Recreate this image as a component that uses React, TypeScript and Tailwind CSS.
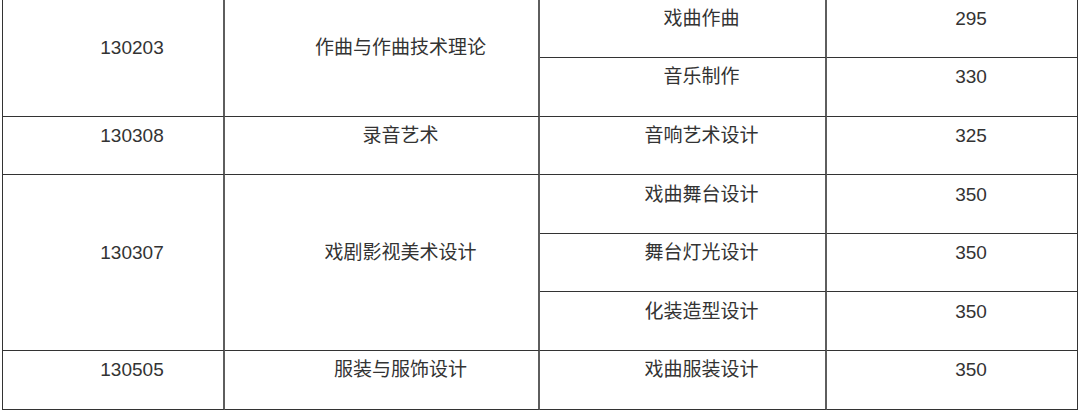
import React from 'react';

type Cell = { text: string; col: string; row: string; last?: boolean };

const cells: Cell[] = [
  { text: '130203', col: 'col-start-1', row: 'row-start-1 row-span-2' },
  { text: '作曲与作曲技术理论', col: 'col-start-2', row: 'row-start-1 row-span-2' },
  { text: '戏曲作曲', col: 'col-start-3', row: 'row-start-1' },
  { text: '295', col: 'col-start-4', row: 'row-start-1', last: true },
  { text: '音乐制作', col: 'col-start-3', row: 'row-start-2' },
  { text: '330', col: 'col-start-4', row: 'row-start-2', last: true },
  { text: '130308', col: 'col-start-1', row: 'row-start-3' },
  { text: '录音艺术', col: 'col-start-2', row: 'row-start-3' },
  { text: '音响艺术设计', col: 'col-start-3', row: 'row-start-3' },
  { text: '325', col: 'col-start-4', row: 'row-start-3', last: true },
  { text: '130307', col: 'col-start-1', row: 'row-start-4 row-span-3' },
  { text: '戏剧影视美术设计', col: 'col-start-2', row: 'row-start-4 row-span-3' },
  { text: '戏曲舞台设计', col: 'col-start-3', row: 'row-start-4' },
  { text: '350', col: 'col-start-4', row: 'row-start-4', last: true },
  { text: '舞台灯光设计', col: 'col-start-3', row: 'row-start-5' },
  { text: '350', col: 'col-start-4', row: 'row-start-5', last: true },
  { text: '化装造型设计', col: 'col-start-3', row: 'row-start-6' },
  { text: '350', col: 'col-start-4', row: 'row-start-6', last: true },
  { text: '130505', col: 'col-start-1', row: 'row-start-7' },
  { text: '服装与服饰设计', col: 'col-start-2', row: 'row-start-7' },
  { text: '戏曲服装设计', col: 'col-start-3', row: 'row-start-7' },
  { text: '350', col: 'col-start-4', row: 'row-start-7', last: true },
];

export default function App() {
  return (
    <div className="w-[1080px] h-[412px] overflow-hidden bg-white">
      <div
        className="ml-[2px] -mt-[1.5px] w-[1076px] grid grid-cols-[222px_315px_287px_251px] grid-rows-[repeat(7,58.6px)] border-l border-t border-[#333] text-[19px] leading-[20px] text-[#333]"
        style={{ fontFamily: '"Liberation Sans", "Noto Sans CJK SC", sans-serif' }}
      >
        {cells.map((c, i) => (
          <div
            key={i}
            className={`${c.col} ${c.row} flex items-center justify-center pl-[38px] pb-[19px] border-b border-b-[#333] ${
              c.last ? 'border-r border-r-[#333]' : 'border-r-2 border-r-[#5e5e5e]'
            }`}
          >
            {c.text}
          </div>
        ))}
      </div>
    </div>
  );
}
